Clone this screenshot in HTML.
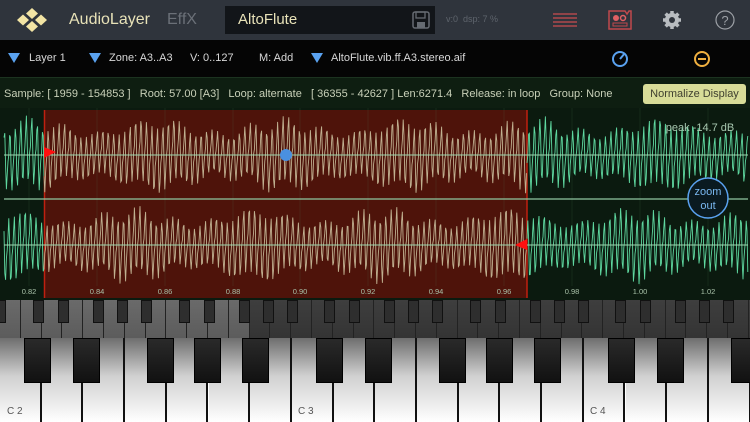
<!DOCTYPE html>
<html><head><meta charset="utf-8"><style>
*{margin:0;padding:0;box-sizing:border-box}
body{width:750px;height:422px;overflow:hidden;background:#000;font-family:"Liberation Sans",sans-serif;position:relative}
.a{position:absolute;white-space:nowrap}
#top{left:0;top:0;width:750px;height:40px;background:#2f343c}
#bar2{left:0;top:40px;width:750px;height:37px;background:#050505}
#info{left:0;top:77px;width:750px;height:31px;background:#0e1e11;border-top:1px solid #1c3320}
.t2{font-size:11px;color:#d8d8d8;top:52px}
.tri{display:inline-block;width:0;height:0;border-left:6px solid transparent;border-right:6px solid transparent;border-top:10px solid #5aa2f0;position:absolute;top:53px}
.ti{font-size:11px;color:#c8d0b8;top:88px}
</style></head><body>
<div class="a" id="top"></div>
<svg class="a" style="left:14px;top:7px" width="36" height="26" viewBox="0 0 36 26">
<g fill="#f2e4a4"><path d="M18 1 L24 6.5 L18 12 L12 6.5Z"/><path d="M9 7.5 L15 13 L9 18.5 L3 13Z"/><path d="M27 7.5 L33 13 L27 18.5 L21 13Z"/><path d="M18 14 L24 19.5 L18 25 L12 19.5Z"/></g></svg>
<div class="a" style="left:69px;top:11px;font-size:16px;color:#e8e2b8">AudioLayer</div>
<div class="a" style="left:167px;top:11px;font-size:16px;color:#6b7078">EffX</div>
<div class="a" style="left:225px;top:6px;width:210px;height:28px;background:#121519"></div>
<div class="a" style="left:238px;top:11px;font-size:15px;color:#e8e2b8">AltoFlute</div>
<svg class="a" style="left:412px;top:11px" width="18" height="18" viewBox="0 0 18 18"><rect x="1" y="1" width="16" height="16" rx="2" fill="none" stroke="#666b72" stroke-width="1.5"/><rect x="4" y="1" width="9" height="6" fill="none" stroke="#666b72" stroke-width="1.3"/><rect x="5" y="11" width="8" height="6" fill="#666b72"/></svg>
<div class="a" style="left:446px;top:14px;font-size:9px;color:#5e646c">v:0&nbsp;&nbsp;dsp: 7 %</div>
<svg class="a" style="left:553px;top:12px" width="24" height="16"><g stroke="#b0484c" stroke-width="1.6"><line x1="0" y1="2" x2="24" y2="2"/><line x1="0" y1="6" x2="24" y2="6"/><line x1="0" y1="10" x2="24" y2="10"/><line x1="0" y1="14" x2="24" y2="14"/></g></svg>
<svg class="a" style="left:608px;top:10px" width="24" height="20"><path d="M1 1 H17 L19 4 L21 1 H23 V19 H1Z" fill="none" stroke="#c0484c" stroke-width="1.5"/><circle cx="8" cy="8" r="3" fill="#e06064"/><circle cx="15" cy="8" r="2.5" fill="none" stroke="#e06064" stroke-width="1.5"/><rect x="5" y="13" width="14" height="3" fill="none" stroke="#c0484c"/></svg>
<svg class="a" style="left:662px;top:10px" width="20" height="20" viewBox="0 0 20 20"><g fill="#b8bcc0"><circle cx="10" cy="10" r="7"/><g stroke="#b8bcc0" stroke-width="3.5"><line x1="10" y1="1" x2="10" y2="19"/><line x1="1" y1="10" x2="19" y2="10"/><line x1="3.6" y1="3.6" x2="16.4" y2="16.4"/><line x1="16.4" y1="3.6" x2="3.6" y2="16.4"/></g></g><circle cx="10" cy="10" r="3" fill="#2f343c"/></svg>
<svg class="a" style="left:715px;top:10px" width="20" height="20"><circle cx="10" cy="10" r="9" fill="none" stroke="#9ca0a6" stroke-width="1.2"/><text x="10" y="15" font-size="13" text-anchor="middle" fill="#9ca0a6" font-family="Liberation Sans">?</text></svg>

<div class="a" id="bar2"></div>
<span class="tri" style="left:8px"></span><div class="a t2" style="left:29px">Layer 1</div>
<span class="tri" style="left:89px"></span><div class="a t2" style="left:109px">Zone: A3..A3</div>
<div class="a t2" style="left:190px">V: 0..127</div>
<div class="a t2" style="left:259px">M: Add</div>
<span class="tri" style="left:311px"></span><div class="a t2" style="left:331px">AltoFlute.vib.ff.A3.stereo.aif</div>
<svg class="a" style="left:611px;top:50px" width="18" height="18"><circle cx="9" cy="9" r="7" fill="none" stroke="#5aa2f0" stroke-width="2"/><line x1="9" y1="9" x2="14" y2="3" stroke="#5aa2f0" stroke-width="2"/></svg>
<svg class="a" style="left:693px;top:50px" width="18" height="18"><circle cx="9" cy="9" r="7" fill="none" stroke="#f0b040" stroke-width="2"/><line x1="5" y1="9" x2="13" y2="9" stroke="#f0b040" stroke-width="2"/></svg>

<div class="a" id="info"></div>
<div class="a ti" style="left:4px">Sample: [ 1959 - 154853 ]&nbsp;&nbsp;&nbsp;Root: 57.00 [A3]&nbsp;&nbsp;&nbsp;Loop: alternate&nbsp;&nbsp;&nbsp;[ 36355 - 42627 ] Len:6271.4&nbsp;&nbsp;&nbsp;Release: in loop&nbsp;&nbsp;&nbsp;Group: None</div>
<div class="a" style="left:643px;top:84px;width:103px;height:20px;background:#d8dc98;border-radius:3px;font-size:11px;color:#404030;text-align:center;line-height:20px">Normalize Display</div>

<svg class="a" id="wave" style="left:0;top:108px" width="750" height="192"></svg>

<div class="a" id="mini" style="left:0;top:300px;width:750px;height:38px;background:#333"></div>
<div class="a" id="keys" style="left:0;top:338px;width:750px;height:84px;background:#fff"></div>

<script>
var W=document.getElementById('wave'),s='';
s+='<rect width="750" height="192" fill="#0b1a0f"/>';
var ticks=[[29,'0.82'],[97,'0.84'],[165,'0.86'],[233,'0.88'],[300,'0.90'],[368,'0.92'],[436,'0.94'],[504,'0.96'],[572,'0.98'],[640,'1.00'],[708,'1.02']];
s+='<rect x="44" y="2" width="483" height="188" fill="#4e130a"/>';
s+='<line x1="44.5" y1="2" x2="44.5" y2="190" stroke="#c02010" stroke-width="1.5"/><line x1="527" y1="2" x2="527" y2="190" stroke="#c02010" stroke-width="1.5"/>';
ticks.forEach(function(t){s+='<line x1="'+t[0]+'" y1="0" x2="'+t[0]+'" y2="178" stroke="rgba(90,160,110,0.12)"/><text x="'+t[0]+'" y="186" font-size="7.5" fill="#a8c0a8" text-anchor="middle" font-family="Liberation Sans">'+t[1]+'</text>';});
function wave(cy,seed,x0,x1,col){var p='';for(var x=x0;x<=x1;x+=0.8){var y=cy+(Math.sin(x*1.15+seed)*0.85+Math.sin(x*2.3+seed*2)*0.35+Math.sin(x*0.17)*0.2)*32*(0.82+0.18*Math.sin(x*0.05+seed));p+=(p?'L':'M')+x.toFixed(1)+' '+y.toFixed(1);}return '<path d="'+p+'" fill="none" stroke="'+col+'" stroke-width="0.9"/>';}
s+=wave(47,0,4,44,'#5fd8a0')+wave(47,0,44,527,'#c0b090')+wave(47,0,527,748,'#5fd8a0');
s+=wave(137,1.3,4,44,'#5fd8a0')+wave(137,1.3,44,527,'#c0b090')+wave(137,1.3,527,748,'#5fd8a0');
s+='<line x1="4" y1="47" x2="748" y2="47" stroke="#9ed8b0" stroke-width="1"/><line x1="4" y1="137" x2="748" y2="137" stroke="#9ed8b0" stroke-width="1"/>';
s+='<line x1="4" y1="91" x2="748" y2="91" stroke="#8fc8a0" stroke-width="1.2"/>';
s+='<path d="M44 39 L56 44 L44 50Z" fill="#ff1010"/><path d="M527 131 L515 137 L527 142Z" fill="#ff1010"/>';
s+='<circle cx="286" cy="47" r="6" fill="#4a90e0"/>';
s+='<text x="700" y="23" font-size="11" fill="#a8c8b0" text-anchor="middle" font-family="Liberation Sans">peak -14.7 dB</text>';
s+='<circle cx="708" cy="90" r="20" fill="#0a1a20" stroke="#5aa2f0" stroke-width="1.5"/><text x="708" y="87" font-size="11" fill="#7ab8f0" text-anchor="middle" font-family="Liberation Sans">zoom</text><text x="708" y="101" font-size="11" fill="#7ab8f0" text-anchor="middle" font-family="Liberation Sans">out</text>';
W.innerHTML=s;
var m='',wk=20.8;
for(var i=0;i<37;i++){var x=i*wk;var c=x<245?'linear-gradient(#6a6a6a,#5c5c5c)':'linear-gradient(#3e3e3e,#343434)';m+='<div class="a" style="left:'+x.toFixed(1)+'px;top:0;width:'+wk+'px;height:38px;background:'+c+';border-right:1px solid #222"></div>';}
var boff=[33,58,93,117,141];
for(var o=-1;o<6;o++)boff.forEach(function(b){var x=o*145.6+b;m+='<div class="a" style="left:'+x.toFixed(1)+'px;top:0;width:11px;height:23px;background:#2e2e2e;border:1px solid #111"></div>';});
document.getElementById('mini').innerHTML=m;
var k='',W2=41.7;
for(var i=0;i<19;i++){var x=i*W2;k+='<div class="a" style="left:'+x.toFixed(1)+'px;top:0;width:'+W2+'px;height:84px;background:linear-gradient(#6e6e6e,#d0d0d0 45%,#fff);border-right:2px solid #111"></div>';}
var bx=[24,73,147,194,242];
for(var o=0;o<3;o++)bx.forEach(function(b){k+='<div class="a" style="left:'+(o*292+b)+'px;top:0;width:27px;height:45px;background:linear-gradient(#2a2a2a,#111);border:1px solid #000"></div>';});
[['C 2',7],['C 3',298],['C 4',590]].forEach(function(c){k+='<div class="a" style="left:'+c[1]+'px;top:68px;font-size:10px;color:#555">'+c[0]+'</div>';});
document.getElementById('keys').innerHTML=k;
</script>
</body></html>
